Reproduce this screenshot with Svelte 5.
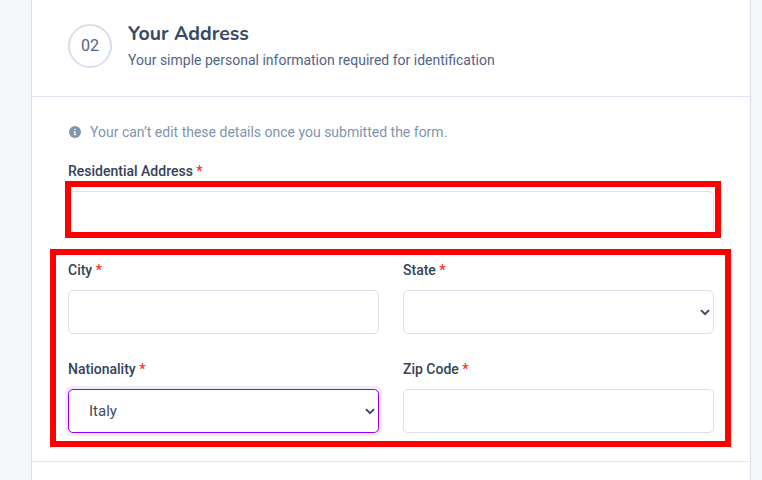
<script>
  let nationality = $state('Italy');
  let region = $state('');
</script>

{#snippet label(id, text)}
  <label for={id}>{text} <span class="req">*</span></label>
{/snippet}

{#snippet chevron()}
  <svg class="chevron" width="10" height="7" viewBox="0 0 10 7" aria-hidden="true">
    <path d="M1 1.1 5 5.1 9 1.1" fill="none" stroke="#364a63" stroke-width="2" />
  </svg>
{/snippet}

<div class="page">
  <main class="card">
    <header>
      <div class="number">02</div>
      <div class="heading">
        <h5>Your Address</h5>
        <p>Your simple personal information required for identification</p>
      </div>
    </header>
    <section>
      <div class="note">
        <svg width="12" height="12" viewBox="0 0 12 12" aria-hidden="true">
          <circle cx="6" cy="6" r="6" fill="#8094ae" />
          <path d="M5.2 2.7h1.6v1.4H5.2zM4.6 5.2h2.2v3h.6v1H4.6v-1h.6v-2h-.6z" fill="#fff" fill-opacity=".8" />
        </svg>
        <span>Your can’t edit these details once you submitted the form.</span>
      </div>
      <div class="grid">
        <div class="field wide">
          {@render label('address', 'Residential Address')}
          <input id="address" type="text" />
          <div class="mark mark-address"></div>
        </div>
        <div class="field">
          {@render label('city', 'City')}
          <input id="city" type="text" />
        </div>
        <div class="field">
          {@render label('state', 'State')}
          <div class="select">
            <select id="state" bind:value={region}><option value=""></option></select>
            {@render chevron()}
          </div>
        </div>
        <div class="field">
          {@render label('nationality', 'Nationality')}
          <div class="select active">
            <select id="nationality" bind:value={nationality}><option>Italy</option></select>
            {@render chevron()}
          </div>
        </div>
        <div class="field">
          {@render label('zip', 'Zip Code')}
          <input id="zip" type="text" />
        </div>
        <div class="mark mark-details"></div>
      </div>
    </section>
    <footer></footer>
  </main>
</div>

<style>
  :global(body) {
    margin: 0;
    background: #f5f6fa;
  }
  .page, .page * {
    box-sizing: border-box;
  }
  .page {
    height: 480px;
    overflow: hidden;
    padding: 0 11px 0 31px;
    font-family: Roboto, "Liberation Sans", sans-serif;
    font-size: 14px;
    color: #526484;
  }
  .card {
    height: 480px;
    background: #fff;
    border: solid #dbdfea;
    border-width: 0 1px;
  }
  header {
    display: flex;
    gap: 16px;
    height: 97px;
    padding: 24px 36px 0;
    border-bottom: 1px solid #e0e5f0;
  }
  .number {
    width: 44px;
    height: 44px;
    border: 2px solid #dbdfea;
    border-radius: 50%;
    line-height: 40px;
    text-align: center;
    font-size: 16px;
  }
  h5 {
    margin: -2px 0 0;
    font: 700 19.5px/24px Nunito, Lato, sans-serif;
    color: #364a63;
  }
  p {
    margin: 3px 0 0;
    line-height: 22px;
  }
  section {
    height: 365px;
    padding: 25px 36px 0;
    border-bottom: 1px solid #e5e9f2;
  }
  .note {
    display: flex;
    align-items: center;
    gap: 9px;
    height: 20px;
    margin-left: 1px;
    color: #8094ae;
  }
  .grid {
    position: relative;
    display: grid;
    grid-template-columns: 1fr 1fr;
    gap: 26px 24px;
    margin-top: 20px;
  }
  .field {
    position: relative;
    height: 73px;
  }
  .wide {
    grid-column: span 2;
  }
  label {
    display: block;
    height: 29px;
    line-height: 18px;
    font-weight: 500;
    color: #344357;
  }
  .req {
    color: #ff2d2d;
  }
  input, select {
    display: block;
    width: 100%;
    height: 44px;
    margin: 0;
    padding: 0 20px;
    border: 1px solid #dbdfea;
    border-radius: 5px;
    outline: none;
    background: #fff;
    color: #3c4d62;
    font: 15px Roboto, sans-serif;
    appearance: none;
  }
  .select {
    position: relative;
  }
  .active select {
    border-color: #9500ff;
    box-shadow: 0 0 0 3px #f1e9ff;
  }
  .chevron {
    position: absolute;
    right: 4px;
    top: 19px;
    pointer-events: none;
  }
  .mark {
    position: absolute;
    border: 6px solid #f00;
    pointer-events: none;
  }
  .mark-address {
    left: -3px;
    right: -7px;
    top: 19px;
    height: 57px;
  }
  .mark-details {
    left: -18px;
    right: -17px;
    top: 87px;
    height: 198px;
  }
</style>
